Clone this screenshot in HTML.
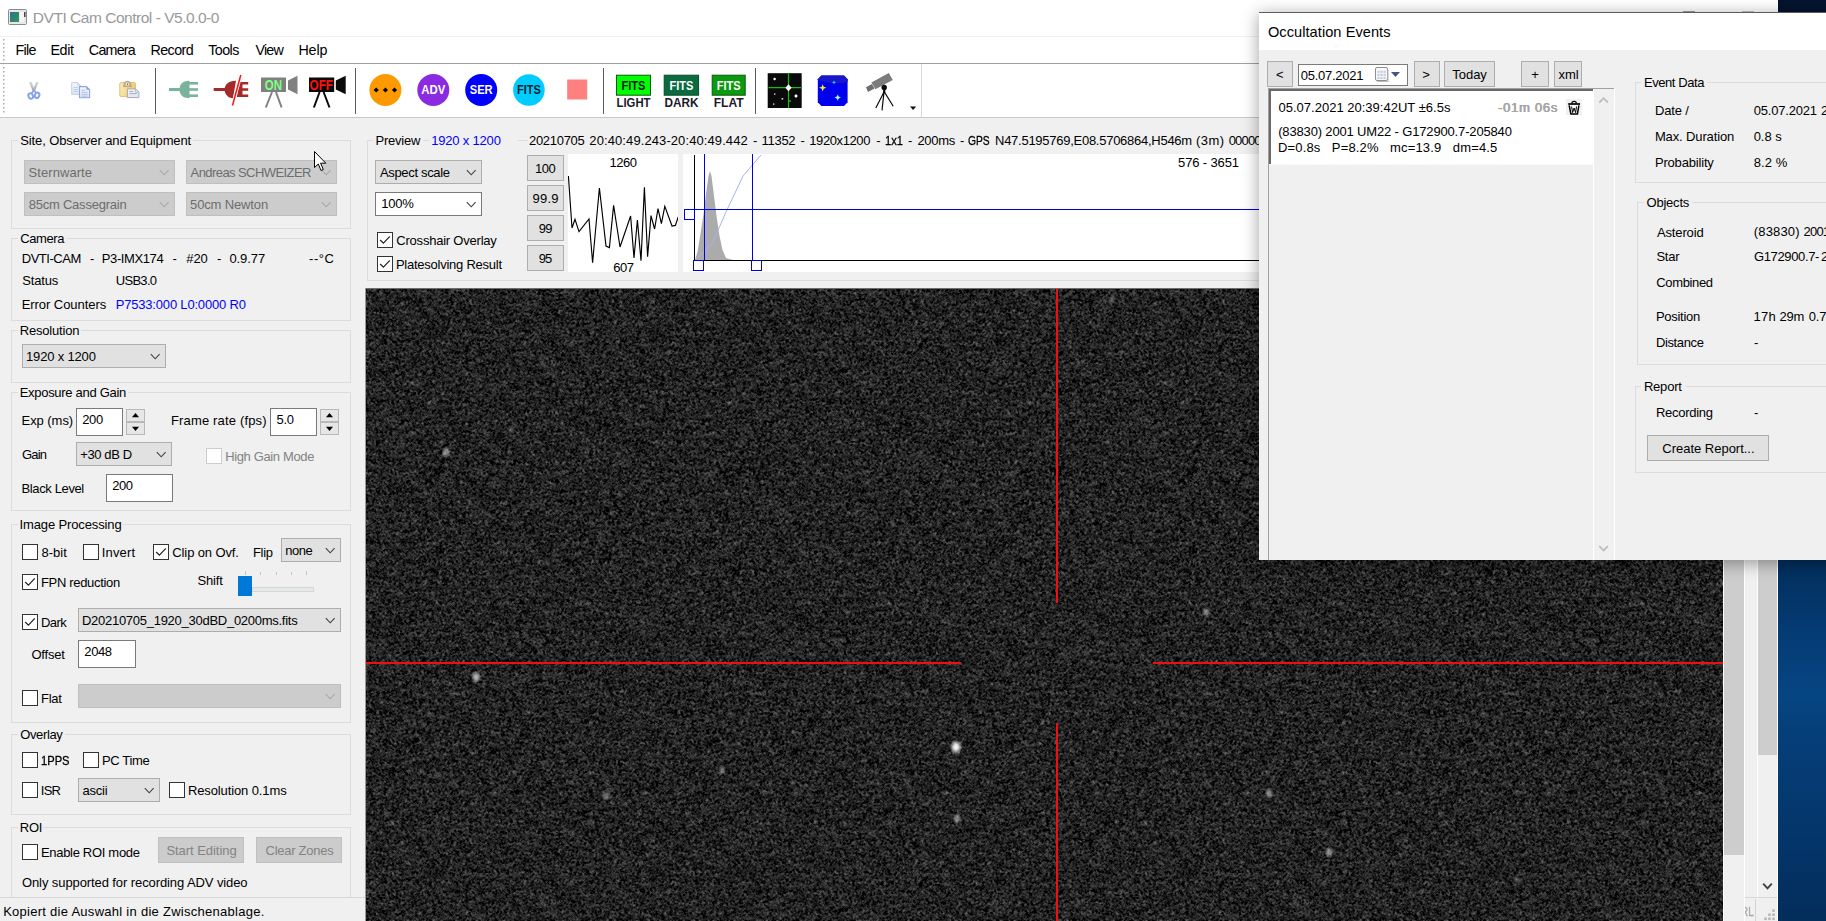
<!DOCTYPE html>
<html><head><meta charset="utf-8"><title>DVTI Cam Control</title><style>
html,body{margin:0;padding:0;}
body{width:1826px;height:921px;overflow:hidden;position:relative;background:#f0f0f0;font-family:"Liberation Sans",sans-serif;}
div,span,svg{position:absolute;}
.t{white-space:pre;line-height:16px;height:16px;}
</style></head><body>
<div style="left:0px;top:0px;width:1778px;height:35px;background:#ffffff;"></div>
<div style="left:0px;top:35px;width:1778px;height:28px;background:#ffffff;"></div>
<div style="left:0px;top:36px;width:1778px;height:1px;background:#f0f1f8;"></div>
<div style="left:0px;top:63px;width:1778px;height:1px;background:#a0a0a0;"></div>
<div style="left:0px;top:64px;width:1778px;height:53px;background:#ffffff;"></div>
<div style="left:0px;top:117px;width:1778px;height:1px;background:#c8c8c8;"></div>
<div style="left:921px;top:64px;width:1px;height:53px;background:#d8d8d8;"></div>
<svg style="left:8px;top:9px" width="20" height="17" viewBox="0 0 20 17">
<rect x="0.5" y="0.5" width="18" height="15" rx="1" fill="#e8e8e8" stroke="#8a8a8a"/>
<defs><linearGradient id="ig" x1="0" y1="0" x2="1" y2="1"><stop offset="0" stop-color="#2e6e8e"/><stop offset="1" stop-color="#2f9a5a"/></linearGradient></defs>
<rect x="2" y="3" width="9" height="10" fill="url(#ig)"/>
<rect x="12" y="3" width="4" height="10" fill="#f4f4f4"/>
<rect x="16" y="3" width="1.5" height="5" fill="#444"/>
</svg>
<span class="t" style="left:32.83px;top:10px;font-size:15.5px;color:#999999;letter-spacing:-0.477px;">DVTI Cam Control - V5.0.0-0</span>
<span class="t" style="left:15.43px;top:42px;font-size:14.3px;letter-spacing:-0.676px;">File</span>
<span class="t" style="left:50.43px;top:42px;font-size:14.3px;letter-spacing:-0.386px;">Edit</span>
<span class="t" style="left:88.87px;top:42px;font-size:14.3px;letter-spacing:-0.785px;">Camera</span>
<span class="t" style="left:150.43px;top:42px;font-size:14.3px;letter-spacing:-0.559px;">Record</span>
<span class="t" style="left:208.28px;top:42px;font-size:14.3px;letter-spacing:-0.584px;">Tools</span>
<span class="t" style="left:255.54px;top:42px;font-size:14.3px;letter-spacing:-0.834px;">View</span>
<span class="t" style="left:298.43px;top:42px;font-size:14.3px;letter-spacing:-0.143px;">Help</span>
<svg style="left:3px;top:39px" width="3" height="24"><rect x="0" y="0" width="1.5" height="1.5" fill="#a8a8a8"/><rect x="0" y="4" width="1.5" height="1.5" fill="#a8a8a8"/><rect x="0" y="8" width="1.5" height="1.5" fill="#a8a8a8"/><rect x="0" y="12" width="1.5" height="1.5" fill="#a8a8a8"/><rect x="0" y="16" width="1.5" height="1.5" fill="#a8a8a8"/><rect x="0" y="20" width="1.5" height="1.5" fill="#a8a8a8"/></svg>
<svg style="left:3px;top:67px" width="3" height="48"><rect x="0" y="0" width="1.5" height="1.5" fill="#a8a8a8"/><rect x="0" y="4" width="1.5" height="1.5" fill="#a8a8a8"/><rect x="0" y="8" width="1.5" height="1.5" fill="#a8a8a8"/><rect x="0" y="12" width="1.5" height="1.5" fill="#a8a8a8"/><rect x="0" y="16" width="1.5" height="1.5" fill="#a8a8a8"/><rect x="0" y="20" width="1.5" height="1.5" fill="#a8a8a8"/><rect x="0" y="24" width="1.5" height="1.5" fill="#a8a8a8"/><rect x="0" y="28" width="1.5" height="1.5" fill="#a8a8a8"/><rect x="0" y="32" width="1.5" height="1.5" fill="#a8a8a8"/><rect x="0" y="36" width="1.5" height="1.5" fill="#a8a8a8"/><rect x="0" y="40" width="1.5" height="1.5" fill="#a8a8a8"/><rect x="0" y="44" width="1.5" height="1.5" fill="#a8a8a8"/></svg>
<div style="left:155px;top:68px;width:1px;height:46px;background:#5a5a5a;"></div>
<div style="left:355px;top:68px;width:1px;height:46px;background:#5a5a5a;"></div>
<div style="left:603px;top:68px;width:1px;height:46px;background:#5a5a5a;"></div>
<div style="left:755px;top:68px;width:1px;height:46px;background:#5a5a5a;"></div>
<svg style="left:0px;top:64px" width="925" height="53" viewBox="0 64 925 53">
<!-- scissors -->
<defs>
<linearGradient id="bl" x1="0" y1="0" x2="0" y2="1"><stop offset="0" stop-color="#d9dce0"/><stop offset="1" stop-color="#9a9fa6"/></linearGradient>
<linearGradient id="cb" x1="0" y1="0" x2="1" y2="0.3"><stop offset="0" stop-color="#fbeebc"/><stop offset="1" stop-color="#f0cc6c"/></linearGradient>
<linearGradient id="pg" x1="0" y1="0" x2="0" y2="1"><stop offset="0" stop-color="#f4f7fc"/><stop offset="1" stop-color="#dde5f4"/></linearGradient>
</defs>
<g>
<path d="M28.9 82 L31.6 82 L35 91 L33 91.9 Z" fill="url(#bl)"/>
<path d="M38.7 82 L36 82 L32.6 91 L34.6 91.9 Z" fill="url(#bl)"/>
<path d="M34 90.4 L31.6 93.4 M34 90.4 L36.4 93" stroke="#8ba6ea" stroke-width="1.8" fill="none"/>
<ellipse cx="30.7" cy="96" rx="2.2" ry="2.8" transform="rotate(-22 30.7 96)" fill="#fff" stroke="#86a2e8" stroke-width="2"/>
<ellipse cx="37.1" cy="95.3" rx="2.2" ry="2.8" transform="rotate(22 37.1 95.3)" fill="#fff" stroke="#86a2e8" stroke-width="2"/>
</g>
<!-- copy -->
<g>
<path d="M71.7 82.6 H77.6 L80.4 85.4 V94.4 H71.7 Z" fill="url(#pg)" stroke="#c6cfe2" stroke-width="1"/>
<path d="M77.6 82.6 V85.4 H80.4" fill="none" stroke="#c6cfe2" stroke-width="0.8"/>
<path d="M73.6 87.5 H78 M73.6 89.5 H78 M73.6 91.5 H78" stroke="#b9c8ea" stroke-width="0.9"/>
<path d="M79.5 86.6 H86.4 L89.6 89.8 V97.7 H79.5 Z" fill="url(#pg)" stroke="#90a6e0" stroke-width="1.1"/>
<path d="M86.4 86.6 V89.8 H89.6 Z" fill="#8aa0dc"/>
<path d="M81.6 90.2 H85 M81.6 92.4 H87.6 M81.6 94.4 H87.6 M81.6 96.2 H87.6" stroke="#a9bbe8" stroke-width="0.9"/>
</g>
<!-- paste -->
<g>
<rect x="119.8" y="82.6" width="15.6" height="14" rx="1.4" fill="url(#cb)" stroke="#dcbc66" stroke-width="0.9"/>
<path d="M123.4 86.6 L124.6 82.4 Q127.4 79.8 130.2 82.4 L131.4 86.6 Z" fill="#bdb49a" stroke="#a39a80" stroke-width="0.7"/>
<path d="M125.6 85.4 L126.2 82.8 Q127.4 81.8 128.6 82.8 L129.2 85.4 Z" fill="#f8f0b8"/>
<rect x="127" y="83.4" width="0.9" height="1.5" fill="#5a5440"/>
<path d="M127.4 88.9 H135.6 L138.9 92.2 V97.6 H127.4 Z" fill="url(#pg)" stroke="#a8aab4" stroke-width="1"/>
<path d="M135.6 88.9 V92.2 H138.9" fill="none" stroke="#a8aab4" stroke-width="0.8"/>
<path d="M129.4 91.4 H133.4 M129.4 93.6 H136.8" stroke="#9aa4c0" stroke-width="0.9"/>
</g>
<!-- green plug -->
<g fill="#7ab39b">
<rect x="169" y="88" width="12" height="3"/>
<path d="M189.5 80.8 C182 80.8 179.5 85 179.5 89.5 C179.5 94 182 98.2 189.5 98.2 Z"/>
<rect x="189" y="82" width="9" height="2.6"/>
<rect x="189" y="88.2" width="9" height="2.6"/>
<rect x="189" y="94.4" width="9" height="2.6"/>
</g>
<!-- red plug -->
<g fill="#a52a2a">
<rect x="213.7" y="88" width="12" height="3"/>
<path d="M236 80.8 C228 80.8 224.6 85 224.6 89.5 C224.6 94 228 98.2 233 98.2 Z"/>
<path d="M241.5 82 H248.2 V84.6 H240.8 Z M240 88.2 H248.2 V90.8 H239.3 Z M238.5 94.4 H248.2 V97 H237.8 Z"/>
<path d="M239.2 82 H242.5 V97 H236.8 Z"/>
</g>
<path d="M240.8 75 L232.5 105.5" stroke="#fff" stroke-width="3.2"/>
<path d="M240.8 75 L232.5 105.5" stroke="#ff1010" stroke-width="1.5"/>
<!-- ON cam -->
<g>
<rect x="261" y="77.5" width="25" height="14.5" fill="#808080"/>
<path d="M288 80.6 L297.5 75.7 V94.3 L288 89.4 Z" fill="#808080"/>
<path d="M272 92 L265.8 107.5 M276 92 L281.6 107.5" stroke="#808080" stroke-width="2" fill="none"/>
<text x="273.5" y="89.6" font-family="Liberation Sans, sans-serif" font-weight="bold" font-size="14" fill="#80ff80" text-anchor="middle" textLength="17.3" lengthAdjust="spacingAndGlyphs">ON</text>
</g>
<!-- OFF cam -->
<g>
<rect x="309" y="77.5" width="25.2" height="14.5" fill="#0a0a0a"/>
<path d="M335.8 80.6 L345.7 75.7 V94.3 L335.8 89.4 Z" fill="#0a0a0a"/>
<path d="M319.6 92 L313.9 107.5 M323.6 92 L329.5 107.5" stroke="#0a0a0a" stroke-width="2" fill="none"/>
<text x="321.3" y="89.6" font-family="Liberation Sans, sans-serif" font-weight="bold" font-size="14" fill="#ff1010" text-anchor="middle" textLength="23.5" lengthAdjust="spacingAndGlyphs">OFF</text>
</g>
<!-- circles -->
<circle cx="385.4" cy="90" r="16" fill="#ff9900"/>
<g fill="#000"><path d="M376.2 87.4 L378.8 90 L376.2 92.6 L373.6 90 Z"/><path d="M385.4 87.4 L388 90 L385.4 92.6 L382.8 90 Z"/><path d="M394.5 87.4 L397.1 90 L394.5 92.6 L391.9 90 Z"/></g>
<circle cx="433.3" cy="90" r="16" fill="#8a2be2"/>
<text x="433.3" y="94" font-family="Liberation Sans, sans-serif" font-weight="bold" font-size="12.5" fill="#fff" text-anchor="middle" textLength="24" lengthAdjust="spacingAndGlyphs">ADV</text>
<circle cx="481.2" cy="90" r="16" fill="#0000ff"/>
<text x="481.2" y="94" font-family="Liberation Sans, sans-serif" font-weight="bold" font-size="12.5" fill="#fff" text-anchor="middle" textLength="23" lengthAdjust="spacingAndGlyphs">SER</text>
<circle cx="528.9" cy="90" r="15.8" fill="#00ccff"/>
<text x="528.9" y="94" font-family="Liberation Sans, sans-serif" font-weight="bold" font-size="12.5" fill="#06222a" text-anchor="middle" textLength="24" lengthAdjust="spacingAndGlyphs">FITS</text>
<rect x="567.2" y="79.5" width="20" height="20" fill="#ff8080"/>
<!-- FITS LIGHT / DARK / FLAT -->
<rect x="616.5" y="75.2" width="34" height="20" fill="#00ff00" stroke="#0a5a0a" stroke-width="1"/>
<text x="633.5" y="90" font-family="Liberation Sans, sans-serif" font-weight="bold" font-size="12.5" fill="#06200a" text-anchor="middle" textLength="24" lengthAdjust="spacingAndGlyphs">FITS</text>
<text x="633.5" y="106.6" font-family="Liberation Sans, sans-serif" font-weight="bold" font-size="12.5" fill="#1a1a2a" text-anchor="middle" textLength="34" lengthAdjust="spacingAndGlyphs">LIGHT</text>
<rect x="664.2" y="75.2" width="34.4" height="20" fill="#0a6a40" stroke="#0a4a2a" stroke-width="1"/>
<text x="681.4" y="90" font-family="Liberation Sans, sans-serif" font-weight="bold" font-size="12.5" fill="#fff" text-anchor="middle" textLength="24" lengthAdjust="spacingAndGlyphs">FITS</text>
<text x="681.4" y="106.6" font-family="Liberation Sans, sans-serif" font-weight="bold" font-size="12.5" fill="#1a1a2a" text-anchor="middle" textLength="34" lengthAdjust="spacingAndGlyphs">DARK</text>
<rect x="712.2" y="75.2" width="33" height="20" fill="#0a9a10" stroke="#0a5a0a" stroke-width="1"/>
<text x="728.7" y="90" font-family="Liberation Sans, sans-serif" font-weight="bold" font-size="12.5" fill="#fff" text-anchor="middle" textLength="24" lengthAdjust="spacingAndGlyphs">FITS</text>
<text x="728.7" y="106.6" font-family="Liberation Sans, sans-serif" font-weight="bold" font-size="12.5" fill="#1a1a2a" text-anchor="middle" textLength="30" lengthAdjust="spacingAndGlyphs">FLAT</text>
<!-- star field icon -->
<rect x="767.7" y="73.2" width="34" height="34.8" fill="#0a0a0a"/>
<path d="M788.5 73.2 V108 M768.5 87.7 H801" stroke="#10c010" stroke-width="1.2"/>
<path d="M788.5 84.2 L791.6 87.7 L788.5 91.2 L785.4 87.7 Z" fill="#fff"/>
<path d="M774.6 77.4 L776.2 79 L774.6 80.6 L773 79 Z M796 94 L797.8 96 L796 98 L794.2 96 Z" fill="#fff"/>
<rect x="774" y="93.4" width="1.4" height="1.4" fill="#ddd"/><rect x="781.6" y="98" width="1.6" height="1.6" fill="#ddd"/><rect x="773" y="103.4" width="1.4" height="1.4" fill="#ddd"/><rect x="789.4" y="100.4" width="1.2" height="1.2" fill="#ddd"/>
<!-- blue sky icon -->
<path d="M821.4 75.6 H844 L847.6 79.2 V102.3 L844 105.9 H821.4 L817.8 102.3 V79.2 Z" fill="#0000ee"/>
<path d="M817.8 80 C828 84 838 84 847.6 82 V79.2 L844 75.6 H821.4 L817.8 79.2 Z" fill="#1818c8"/>
<path d="M822.7 84.2 L823.7 86.8 L826.3 87.8 L823.7 88.8 L822.7 91.4 L821.7 88.8 L819.1 87.8 L821.7 86.8 Z" fill="#ffee10"/>
<path d="M834 80.4 L834.7 81.7 L836 82.4 L834.7 83.1 L834 84.4 L833.3 83.1 L832 82.4 L833.3 81.7 Z" fill="#20d0e8"/>
<path d="M837.7 94.4 L838.7 96.6 L840.9 97.6 L838.7 98.6 L837.7 100.8 L836.7 98.6 L834.5 97.6 L836.7 96.6 Z" fill="#a0ffe0"/>
<!-- telescope -->
<path d="M871.4 82.4 L888.8 73 L892.8 79.9 L875.4 89.2 Z" fill="#7c7c7c"/>
<path d="M866 87.2 L872 84 L874.4 88.6 L868 92 Z" fill="#6e6e6e"/>
<circle cx="884.2" cy="87.4" r="2.7" fill="#0a0a0a"/>
<path d="M884 92 L875.8 108 M884 92 L882 110.4 M884.4 92 L893.2 106.3" stroke="#0a0a0a" stroke-width="1.2" fill="none"/>
<path d="M884.2 87 V93" stroke="#0a0a0a" stroke-width="2.2"/>
<path d="M910 106.6 H916.2 L913.1 110 Z" fill="#111"/>
</svg>

<div style="left:11px;top:140px;width:340px;height:89px;border:1px solid #dcdcdc;box-sizing:border-box;"></div>
<div style="left:18.3px;top:140px;width:175px;height:1px;background:#f0f0f0;"></div>
<span class="t" style="left:20.31px;top:133px;font-size:13px;letter-spacing:-0.121px;">Site, Observer and Equipment</span>
<div style="left:24px;top:160px;width:151px;height:24px;background:#cccccc;border:1px solid #bfbfbf;box-sizing:border-box;"></div>
<span class="t" style="left:28.61px;top:165px;font-size:13px;color:#6d6d6d;letter-spacing:0.056px;">Sternwarte</span>
<svg style="left:159px;top:169.0px" width="11" height="8" viewBox="0 0 11 8"><path d="M0.8 1.2 L5.2 5.8 L9.6 1.2" fill="none" stroke="#a8a8a8" stroke-width="1.1"/></svg>
<div style="left:186px;top:160px;width:151px;height:24px;background:#cccccc;border:1px solid #bfbfbf;box-sizing:border-box;"></div>
<span class="t" style="left:190.57px;top:165px;font-size:13px;color:#6d6d6d;letter-spacing:-0.575px;">Andreas SCHWEIZER</span>
<svg style="left:321px;top:169.0px" width="11" height="8" viewBox="0 0 11 8"><path d="M0.8 1.2 L5.2 5.8 L9.6 1.2" fill="none" stroke="#a8a8a8" stroke-width="1.1"/></svg>
<div style="left:24px;top:192px;width:151px;height:24px;background:#cccccc;border:1px solid #bfbfbf;box-sizing:border-box;"></div>
<span class="t" style="left:28.64px;top:197px;font-size:13px;color:#6d6d6d;letter-spacing:-0.218px;">85cm Cassegrain</span>
<svg style="left:159px;top:201.0px" width="11" height="8" viewBox="0 0 11 8"><path d="M0.8 1.2 L5.2 5.8 L9.6 1.2" fill="none" stroke="#a8a8a8" stroke-width="1.1"/></svg>
<div style="left:186px;top:192px;width:151px;height:24px;background:#cccccc;border:1px solid #bfbfbf;box-sizing:border-box;"></div>
<span class="t" style="left:190.08px;top:197px;font-size:13px;color:#6d6d6d;letter-spacing:-0.141px;">50cm Newton</span>
<svg style="left:321px;top:201.0px" width="11" height="8" viewBox="0 0 11 8"><path d="M0.8 1.2 L5.2 5.8 L9.6 1.2" fill="none" stroke="#a8a8a8" stroke-width="1.1"/></svg>
<div style="left:11px;top:238px;width:340px;height:83px;border:1px solid #dcdcdc;box-sizing:border-box;"></div>
<div style="left:18.3px;top:238px;width:48.3px;height:1px;background:#f0f0f0;"></div>
<span class="t" style="left:20.24px;top:231px;font-size:13px;letter-spacing:-0.415px;">Camera</span>
<span class="t" style="left:21.73px;top:251px;font-size:13px;letter-spacing:-0.471px;">DVTI-CAM</span>
<span class="t" style="left:90.02px;top:251px;font-size:13px;">-</span>
<span class="t" style="left:101.83px;top:251px;font-size:13px;letter-spacing:-0.398px;">P3-IMX174</span>
<span class="t" style="left:172.62px;top:251px;font-size:13px;">-</span>
<span class="t" style="left:186.24px;top:251px;font-size:13px;letter-spacing:-0.062px;">#20</span>
<span class="t" style="left:217.02px;top:251px;font-size:13px;">-</span>
<span class="t" style="left:229.39px;top:251px;font-size:13px;letter-spacing:-0.076px;">0.9.77</span>
<span class="t" style="left:309.12px;top:251px;font-size:13px;letter-spacing:0.476px;">--°C</span>
<span class="t" style="left:22.21px;top:273px;font-size:13px;letter-spacing:-0.159px;">Status</span>
<span class="t" style="left:115.8px;top:273px;font-size:13px;letter-spacing:-0.718px;">USB3.0</span>
<span class="t" style="left:21.73px;top:297px;font-size:13px;letter-spacing:-0.063px;">Error Counters</span>
<span class="t" style="left:115.73px;top:297px;font-size:13px;color:#0000ff;letter-spacing:-0.187px;">P7533:000 L0:0000 R0</span>
<div style="left:11px;top:330px;width:340px;height:53px;border:1px solid #dcdcdc;box-sizing:border-box;"></div>
<div style="left:18.2px;top:330px;width:62.6px;height:1px;background:#f0f0f0;"></div>
<span class="t" style="left:19.73px;top:323px;font-size:13px;letter-spacing:-0.191px;">Resolution</span>
<div style="left:22px;top:344px;width:144px;height:24px;background:#e1e1e1;border:1px solid #adadad;box-sizing:border-box;"></div>
<span class="t" style="left:26.01px;top:349px;font-size:13px;letter-spacing:-0.167px;">1920 x 1200</span>
<svg style="left:150px;top:353.0px" width="11" height="8" viewBox="0 0 11 8"><path d="M0.8 1.2 L5.2 5.8 L9.6 1.2" fill="none" stroke="#404040" stroke-width="1.1"/></svg>
<div style="left:11px;top:392px;width:340px;height:119px;border:1px solid #dcdcdc;box-sizing:border-box;"></div>
<div style="left:18.2px;top:392px;width:109.4px;height:1px;background:#f0f0f0;"></div>
<span class="t" style="left:19.73px;top:385px;font-size:13px;letter-spacing:-0.299px;">Exposure and Gain</span>
<span class="t" style="left:21.53px;top:413px;font-size:13px;letter-spacing:-0.047px;">Exp (ms)</span>
<div style="left:76px;top:408px;width:47px;height:28px;background:#ffffff;border:1px solid #7a7a7a;box-sizing:border-box;"></div>
<span class="t" style="left:82.35px;top:412px;font-size:13px;letter-spacing:-0.464px;">200</span>
<div style="left:126px;top:409px;width:19px;height:13px;background:#e6e6e6;border:1px solid #b8b8b8;box-sizing:border-box;"></div>
<div style="left:126px;top:422px;width:19px;height:13px;background:#e6e6e6;border:1px solid #b8b8b8;box-sizing:border-box;"></div>
<svg style="left:126px;top:409px" width="19" height="26"><path d="M6 8.2 L9.5 4 L13 8.2 Z" fill="#000"/><path d="M6 17.8 L9.5 22 L13 17.8 Z" fill="#000"/></svg>
<span class="t" style="left:170.93px;top:413px;font-size:13px;letter-spacing:0.166px;">Frame rate (fps)</span>
<div style="left:270px;top:408px;width:47px;height:28px;background:#ffffff;border:1px solid #7a7a7a;box-sizing:border-box;"></div>
<span class="t" style="left:276.48px;top:412px;font-size:13px;letter-spacing:-0.322px;">5.0</span>
<div style="left:320px;top:409px;width:19px;height:13px;background:#e6e6e6;border:1px solid #b8b8b8;box-sizing:border-box;"></div>
<div style="left:320px;top:422px;width:19px;height:13px;background:#e6e6e6;border:1px solid #b8b8b8;box-sizing:border-box;"></div>
<svg style="left:320px;top:409px" width="19" height="26"><path d="M6 8.2 L9.5 4 L13 8.2 Z" fill="#000"/><path d="M6 17.8 L9.5 22 L13 17.8 Z" fill="#000"/></svg>
<span class="t" style="left:21.95px;top:447px;font-size:13px;letter-spacing:-0.787px;">Gain</span>
<div style="left:76px;top:442px;width:96px;height:24px;background:#e1e1e1;border:1px solid #adadad;box-sizing:border-box;"></div>
<span class="t" style="left:80.37px;top:447px;font-size:13px;letter-spacing:-0.415px;">+30 dB D</span>
<svg style="left:156px;top:451.0px" width="11" height="8" viewBox="0 0 11 8"><path d="M0.8 1.2 L5.2 5.8 L9.6 1.2" fill="none" stroke="#404040" stroke-width="1.1"/></svg>
<div style="left:206px;top:448px;width:16px;height:16px;background:#ffffff;border:1px solid #cccccc;box-sizing:border-box;"></div>
<span class="t" style="left:225.13px;top:449px;font-size:13px;color:#838383;letter-spacing:-0.361px;">High Gain Mode</span>
<span class="t" style="left:21.53px;top:481px;font-size:13px;letter-spacing:-0.374px;">Black Level</span>
<div style="left:106px;top:474px;width:67px;height:28px;background:#ffffff;border:1px solid #7a7a7a;box-sizing:border-box;"></div>
<span class="t" style="left:112.35px;top:478px;font-size:13px;letter-spacing:-0.564px;">200</span>
<div style="left:11px;top:524px;width:340px;height:199px;border:1px solid #dcdcdc;box-sizing:border-box;"></div>
<div style="left:18.2px;top:524px;width:104.8px;height:1px;background:#f0f0f0;"></div>
<span class="t" style="left:19.6px;top:517px;font-size:13px;letter-spacing:-0.134px;">Image Processing</span>
<div style="left:22px;top:544px;width:16px;height:16px;background:#ffffff;border:1px solid #333333;box-sizing:border-box;"></div>
<span class="t" style="left:41.44px;top:545px;font-size:13px;letter-spacing:0.043px;">8-bit</span>
<div style="left:83px;top:544px;width:16px;height:16px;background:#ffffff;border:1px solid #333333;box-sizing:border-box;"></div>
<span class="t" style="left:101.8px;top:545px;font-size:13px;letter-spacing:0.156px;">Invert</span>
<div style="left:153px;top:544px;width:16px;height:16px;background:#ffffff;border:1px solid #333333;box-sizing:border-box;"></div>
<svg style="left:153px;top:544px" width="16" height="16" viewBox="0 0 16 16"><path d="M3.2 8.0 L6.4 11.2 L12.8 4.4" fill="none" stroke="#222" stroke-width="1.2"/></svg>
<span class="t" style="left:172.34px;top:545px;font-size:13px;letter-spacing:-0.115px;">Clip on Ovf.</span>
<span class="t" style="left:252.93px;top:545px;font-size:13px;letter-spacing:-0.312px;">Flip</span>
<div style="left:281px;top:538px;width:60px;height:24px;background:#e1e1e1;border:1px solid #adadad;box-sizing:border-box;"></div>
<span class="t" style="left:285.34px;top:543px;font-size:13px;letter-spacing:-0.493px;">none</span>
<svg style="left:325px;top:547.0px" width="11" height="8" viewBox="0 0 11 8"><path d="M0.8 1.2 L5.2 5.8 L9.6 1.2" fill="none" stroke="#404040" stroke-width="1.1"/></svg>
<div style="left:22px;top:574px;width:16px;height:16px;background:#ffffff;border:1px solid #333333;box-sizing:border-box;"></div>
<svg style="left:22px;top:574px" width="16" height="16" viewBox="0 0 16 16"><path d="M3.2 8.0 L6.4 11.2 L12.8 4.4" fill="none" stroke="#222" stroke-width="1.2"/></svg>
<span class="t" style="left:40.93px;top:575px;font-size:13px;letter-spacing:-0.315px;">FPN reduction</span>
<span class="t" style="left:197.41px;top:573px;font-size:13px;letter-spacing:-0.132px;">Shift</span>
<div style="left:245px;top:571px;width:1px;height:4px;background:#c4c4c4;"></div>
<div style="left:260px;top:572px;width:1px;height:3px;background:#c4c4c4;"></div>
<div style="left:276px;top:572px;width:1px;height:3px;background:#c4c4c4;"></div>
<div style="left:291px;top:572px;width:1px;height:3px;background:#c4c4c4;"></div>
<div style="left:306px;top:571px;width:1px;height:4px;background:#c4c4c4;"></div>
<div style="left:252px;top:587px;width:62px;height:5px;background:#e7eaea;border:1px solid #d6d6d6;box-sizing:border-box;"></div>
<div style="left:238px;top:576px;width:14px;height:20px;background:#0078d7;"></div>
<div style="left:22px;top:614px;width:16px;height:16px;background:#ffffff;border:1px solid #333333;box-sizing:border-box;"></div>
<svg style="left:22px;top:614px" width="16" height="16" viewBox="0 0 16 16"><path d="M3.2 8.0 L6.4 11.2 L12.8 4.4" fill="none" stroke="#222" stroke-width="1.2"/></svg>
<span class="t" style="left:40.93px;top:615px;font-size:13px;letter-spacing:-0.533px;">Dark</span>
<div style="left:78px;top:608px;width:263px;height:24px;background:#e1e1e1;border:1px solid #adadad;box-sizing:border-box;"></div>
<span class="t" style="left:81.93px;top:613px;font-size:13px;letter-spacing:-0.268px;">D20210705_1920_30dBD_0200ms.fits</span>
<svg style="left:325px;top:617.0px" width="11" height="8" viewBox="0 0 11 8"><path d="M0.8 1.2 L5.2 5.8 L9.6 1.2" fill="none" stroke="#404040" stroke-width="1.1"/></svg>
<span class="t" style="left:31.38px;top:647px;font-size:13px;letter-spacing:-0.186px;">Offset</span>
<div style="left:78px;top:640px;width:58px;height:28px;background:#ffffff;border:1px solid #7a7a7a;box-sizing:border-box;"></div>
<span class="t" style="left:84.35px;top:644px;font-size:13px;letter-spacing:-0.434px;">2048</span>
<div style="left:22px;top:690px;width:16px;height:16px;background:#ffffff;border:1px solid #333333;box-sizing:border-box;"></div>
<span class="t" style="left:40.93px;top:691px;font-size:13px;letter-spacing:-0.236px;">Flat</span>
<div style="left:78px;top:684px;width:263px;height:24px;background:#cccccc;border:1px solid #bfbfbf;box-sizing:border-box;"></div>
<svg style="left:325px;top:693.0px" width="11" height="8" viewBox="0 0 11 8"><path d="M0.8 1.2 L5.2 5.8 L9.6 1.2" fill="none" stroke="#a8a8a8" stroke-width="1.1"/></svg>
<div style="left:11px;top:734px;width:340px;height:81px;border:1px solid #dcdcdc;box-sizing:border-box;"></div>
<div style="left:18.2px;top:734px;width:46.8px;height:1px;background:#f0f0f0;"></div>
<span class="t" style="left:20.18px;top:727px;font-size:13px;letter-spacing:-0.358px;">Overlay</span>
<div style="left:22px;top:752px;width:16px;height:16px;background:#ffffff;border:1px solid #333333;box-sizing:border-box;"></div>
<span class="t" style="left:41.01px;top:753px;font-size:13px;transform:scaleX(0.8592);transform-origin:0 0;-webkit-text-stroke:0.3px;">1PPS</span>
<div style="left:83px;top:752px;width:16px;height:16px;background:#ffffff;border:1px solid #333333;box-sizing:border-box;"></div>
<span class="t" style="left:101.93px;top:753px;font-size:13px;letter-spacing:-0.339px;">PC Time</span>
<div style="left:22px;top:782px;width:16px;height:16px;background:#ffffff;border:1px solid #333333;box-sizing:border-box;"></div>
<span class="t" style="left:40.8px;top:783px;font-size:13px;letter-spacing:-0.734px;">ISR</span>
<div style="left:78px;top:778px;width:82px;height:24px;background:#e1e1e1;border:1px solid #adadad;box-sizing:border-box;"></div>
<span class="t" style="left:82.45px;top:783px;font-size:13px;letter-spacing:-0.195px;">ascii</span>
<svg style="left:144px;top:787.0px" width="11" height="8" viewBox="0 0 11 8"><path d="M0.8 1.2 L5.2 5.8 L9.6 1.2" fill="none" stroke="#404040" stroke-width="1.1"/></svg>
<div style="left:169px;top:782px;width:16px;height:16px;background:#ffffff;border:1px solid #333333;box-sizing:border-box;"></div>
<span class="t" style="left:187.93px;top:783px;font-size:13px;letter-spacing:-0.114px;">Resolution 0.1ms</span>
<div style="left:11px;top:827px;width:340px;height:80px;border:1px solid #dcdcdc;box-sizing:border-box;"></div>
<div style="left:18.2px;top:827px;width:25.2px;height:1px;background:#f0f0f0;"></div>
<span class="t" style="left:19.73px;top:820px;font-size:13px;letter-spacing:-0.223px;">ROI</span>
<div style="left:22px;top:844px;width:16px;height:16px;background:#ffffff;border:1px solid #333333;box-sizing:border-box;"></div>
<span class="t" style="left:40.93px;top:845px;font-size:13px;letter-spacing:-0.306px;">Enable ROI mode</span>
<div style="left:158px;top:837px;width:86px;height:26px;background:#cccccc;border:1px solid #bfbfbf;box-sizing:border-box;"></div>
<span class="t" style="left:166.41px;top:843px;font-size:13px;color:#838383;letter-spacing:-0.049px;">Start Editing</span>
<div style="left:256px;top:837px;width:86px;height:26px;background:#cccccc;border:1px solid #bfbfbf;box-sizing:border-box;"></div>
<span class="t" style="left:265.54px;top:843px;font-size:13px;color:#838383;letter-spacing:-0.268px;">Clear Zones</span>
<span class="t" style="left:21.98px;top:875px;font-size:13px;letter-spacing:-0.093px;">Only supported for recording ADV video</span>
<div style="left:0px;top:897px;width:1778px;height:24px;background:#f0f0f0;"></div>
<div style="left:0px;top:897px;width:1778px;height:1px;background:#d7d7d7;"></div>
<span class="t" style="left:3.13px;top:904px;font-size:13px;letter-spacing:0.271px;">Kopiert die Auswahl in die Zwischenablage.</span>
<svg style="left:313px;top:150px" width="16" height="24" viewBox="0 0 16 24"><path d="M1.5 1.5 L1.5 17.5 L5.3 14 L8 20.5 L10.3 19.5 L7.6 13.2 L12.8 13.2 Z" fill="#fff" stroke="#000" stroke-width="1"/></svg>
<div style="left:367px;top:140px;width:1400px;height:141px;border:1px solid #dcdcdc;box-sizing:border-box;"></div>
<div style="left:373px;top:140px;width:50px;height:1px;background:#f0f0f0;"></div>
<span class="t" style="left:375.53px;top:133px;font-size:13px;letter-spacing:-0.234px;">Preview</span>
<div style="left:429px;top:140px;width:89px;height:1px;background:#f0f0f0;"></div>
<span class="t" style="left:431.21px;top:133px;font-size:13px;color:#0000ff;letter-spacing:-0.187px;">1920 x 1200</span>
<div style="left:528px;top:133px;width:740px;height:16px;background:#f0f0f0;"></div>
<span class="t" style="left:528.95px;top:133px;font-size:13px;letter-spacing:-0.291px;">20210705</span>
<span class="t" style="left:589.35px;top:133px;font-size:13px;letter-spacing:0.094px;">20:40:49.243-20:40:49.442</span>
<span class="t" style="left:753.02px;top:133px;font-size:13px;">-</span>
<span class="t" style="left:761.61px;top:133px;font-size:13px;letter-spacing:-0.310px;">11352</span>
<span class="t" style="left:800.62px;top:133px;font-size:13px;">-</span>
<span class="t" style="left:809.31px;top:133px;font-size:13px;letter-spacing:-0.405px;">1920x1200</span>
<span class="t" style="left:876.22px;top:133px;font-size:13px;">-</span>
<span class="t" style="left:884.81px;top:133px;font-size:13px;transform:scaleX(0.8534);transform-origin:0 0;-webkit-text-stroke:0.3px;">1x1</span>
<span class="t" style="left:908.12px;top:133px;font-size:13px;">-</span>
<span class="t" style="left:917.45px;top:133px;font-size:13px;letter-spacing:-0.324px;">200ms</span>
<span class="t" style="left:960.12px;top:133px;font-size:13px;">-</span>
<span class="t" style="left:968.35px;top:133px;font-size:13px;transform:scaleX(0.7900);transform-origin:0 0;-webkit-text-stroke:0.3px;">GPS</span>
<span class="t" style="left:995.03px;top:133px;font-size:13px;letter-spacing:-0.265px;">N47.5195769,E08.5706864,H546m</span>
<span class="t" style="left:1196.09px;top:133px;font-size:13px;letter-spacing:0.398px;">(3m)</span>
<span class="t" style="left:1228.69px;top:133px;font-size:13px;letter-spacing:-0.834px;">00000</span>
<div style="left:375px;top:160px;width:107px;height:24px;background:#e1e1e1;border:1px solid #adadad;box-sizing:border-box;"></div>
<span class="t" style="left:379.97px;top:165px;font-size:13px;letter-spacing:-0.336px;">Aspect scale</span>
<svg style="left:466px;top:169.0px" width="11" height="8" viewBox="0 0 11 8"><path d="M0.8 1.2 L5.2 5.8 L9.6 1.2" fill="none" stroke="#404040" stroke-width="1.1"/></svg>
<div style="left:375px;top:192px;width:107px;height:24px;background:#ffffff;border:1px solid #7a7a7a;box-sizing:border-box;"></div>
<span class="t" style="left:381.21px;top:196px;font-size:13px;letter-spacing:-0.198px;">100%</span>
<svg style="left:466px;top:201.0px" width="11" height="8" viewBox="0 0 11 8"><path d="M0.8 1.2 L5.2 5.8 L9.6 1.2" fill="none" stroke="#404040" stroke-width="1.1"/></svg>
<div style="left:377px;top:232px;width:16px;height:16px;background:#ffffff;border:1px solid #333333;box-sizing:border-box;"></div>
<svg style="left:377px;top:232px" width="16" height="16" viewBox="0 0 16 16"><path d="M3.2 8.0 L6.4 11.2 L12.8 4.4" fill="none" stroke="#222" stroke-width="1.2"/></svg>
<span class="t" style="left:396.34px;top:233px;font-size:13px;letter-spacing:-0.221px;">Crosshair Overlay</span>
<div style="left:377px;top:256px;width:16px;height:16px;background:#ffffff;border:1px solid #333333;box-sizing:border-box;"></div>
<svg style="left:377px;top:256px" width="16" height="16" viewBox="0 0 16 16"><path d="M3.2 8.0 L6.4 11.2 L12.8 4.4" fill="none" stroke="#222" stroke-width="1.2"/></svg>
<span class="t" style="left:395.93px;top:257px;font-size:13px;letter-spacing:-0.244px;">Platesolving Result</span>
<div style="left:527px;top:155px;width:37px;height:26px;background:#e1e1e1;border:1px solid #adadad;box-sizing:border-box;"></div>
<span class="t" style="left:535.01px;top:161px;font-size:13px;letter-spacing:-0.496px;">100</span>
<div style="left:527px;top:185px;width:37px;height:26px;background:#e1e1e1;border:1px solid #adadad;box-sizing:border-box;"></div>
<span class="t" style="left:532.59px;top:191px;font-size:13px;letter-spacing:0.241px;">99.9</span>
<div style="left:527px;top:215px;width:37px;height:26px;background:#e1e1e1;border:1px solid #adadad;box-sizing:border-box;"></div>
<span class="t" style="left:538.79px;top:221px;font-size:13px;letter-spacing:-0.835px;">99</span>
<div style="left:527px;top:245px;width:37px;height:26px;background:#e1e1e1;border:1px solid #adadad;box-sizing:border-box;"></div>
<span class="t" style="left:538.79px;top:251px;font-size:13px;letter-spacing:-0.905px;">95</span>
<div style="left:568px;top:154px;width:110px;height:118px;background:#ffffff;"></div>
<span class="t" style="left:609.61px;top:155px;font-size:13px;letter-spacing:-0.541px;">1260</span>
<span class="t" style="left:613.34px;top:260px;font-size:13px;letter-spacing:-0.488px;">607</span>
<svg style="left:568px;top:154px" width="110" height="118"><polyline points="0.4,22.0 4.0,74.0 7.0,65.4 11.0,77.6 21.0,65.0 24.6,108.6 31.4,34.0 38.0,92.0 41.4,93.6 45.6,51.4 52.0,93.0 62.6,62.0 66.0,104.0 69.4,66.0 73.0,106.6 76.4,33.4 79.6,102.6 83.0,61.6 86.6,75.0 90.0,54.6 93.4,69.6 96.8,52.4 104.0,72.0 107.4,71.4 110.2,63.0" fill="none" stroke="#000" stroke-width="1.15"/></svg>
<div style="left:683px;top:154px;width:1000px;height:118px;background:#ffffff;"></div>
<svg style="left:683px;top:154px" width="700" height="118" viewBox="0 0 700 118">
<path d="M12 106 L14.5 98 L17.5 80 L20.4 61 L23 40 L25.5 22 L27 17 L28.5 22 L31 42 L33.4 61 L36.5 82 L39.5 96 L43 104 L50 106 L100 106.5 Z" fill="#ababab"/>
<path d="M12 106 L29 90 L43 58 L60 22 L78 1" fill="none" stroke="#aab0f8" stroke-width="1"/>
<path d="M11.5 1 V106.5 H700" fill="none" stroke="#000" stroke-width="1"/>
<path d="M21.5 0 V106.5 M69.5 0 V106.5 M1.5 55.5 H700" fill="none" stroke="#0000e0" stroke-width="1"/>
<rect x="1.5" y="55.5" width="10" height="10" fill="#fff" stroke="#0000e0"/>
<rect x="10.5" y="106.5" width="10" height="10" fill="#fff" stroke="#0000e0"/>
<rect x="68.5" y="106.5" width="10" height="10" fill="#fff" stroke="#0000e0"/>
</svg>
<span class="t" style="left:1178.08px;top:155px;font-size:13px;letter-spacing:-0.134px;">576 - 3651</span>
<svg style="left:366px;top:288px" width="1357" height="633" viewBox="0 0 1357 633">
<defs>
<filter id="nz" x="0" y="0" width="100%" height="100%" color-interpolation-filters="sRGB">
<feTurbulence type="fractalNoise" baseFrequency="1.7 1.9" numOctaves="1" seed="7"/>
<feConvolveMatrix order="3" kernelMatrix="1 2 1 2 7 2 1 2 1" edgeMode="duplicate" preserveAlpha="true"/>
<feColorMatrix type="matrix" values="1.75 0 0 0 -0.742  1.75 0 0 0 -0.742  1.75 0 0 0 -0.742  0 0 0 0 1"/>
</filter>
<radialGradient id="st"><stop offset="0" stop-color="#fff" stop-opacity="1"/><stop offset="0.35" stop-color="#fff" stop-opacity="0.85"/><stop offset="1" stop-color="#fff" stop-opacity="0"/></radialGradient>
</defs>
<rect width="1357" height="633" fill="#2e2e2e"/>
<rect width="1357" height="633" filter="url(#nz)"/>
<ellipse cx="80" cy="164" rx="4.8" ry="6.0" fill="url(#st)" opacity="0.55"/>
<ellipse cx="110" cy="389" rx="5.3" ry="6.6" fill="url(#st)" opacity="0.7"/>
<ellipse cx="590" cy="459" rx="6.3" ry="7.8" fill="url(#st)" opacity="1.0"/>
<ellipse cx="591" cy="531" rx="4.8" ry="6.0" fill="url(#st)" opacity="0.5"/>
<ellipse cx="240" cy="508" rx="4.8" ry="6.0" fill="url(#st)" opacity="0.4"/>
<ellipse cx="356" cy="482" rx="4.3" ry="5.4" fill="url(#st)" opacity="0.3"/>
<ellipse cx="840" cy="324" rx="4.8" ry="6.0" fill="url(#st)" opacity="0.4"/>
<ellipse cx="903" cy="505" rx="4.8" ry="6.0" fill="url(#st)" opacity="0.55"/>
<ellipse cx="963" cy="564" rx="4.8" ry="6.0" fill="url(#st)" opacity="0.55"/>
<ellipse cx="746" cy="12" rx="4.3" ry="5.4" fill="url(#st)" opacity="0.3"/>
<ellipse cx="1151" cy="592" rx="4.3" ry="5.4" fill="url(#st)" opacity="0.25"/>
<ellipse cx="70" cy="487" rx="4.3" ry="5.4" fill="url(#st)" opacity="0.2"/>
<ellipse cx="145" cy="142" rx="4.3" ry="5.4" fill="url(#st)" opacity="0.2"/>
<rect x="690" y="0" width="2" height="315" fill="#ee1010"/>
<rect x="690" y="435" width="2" height="198" fill="#ee1010"/>
<rect x="0" y="374" width="595" height="2" fill="#ee1010"/>
<rect x="787" y="374" width="570" height="2" fill="#ee1010"/>
</svg>
<div style="left:365px;top:288px;width:1358px;height:1px;background:#6e6e6e;"></div>
<div style="left:365px;top:288px;width:1px;height:633px;background:#9a9a9a;"></div>
<div style="left:1723px;top:288px;width:55px;height:633px;background:#f0f0f0;"></div>
<div style="left:1723px;top:288px;width:1px;height:633px;background:#ffffff;"></div>
<div style="left:1744px;top:288px;width:1px;height:633px;background:#ffffff;"></div>
<div style="left:1757px;top:288px;width:1px;height:633px;background:#ffffff;"></div>
<div style="left:1777px;top:288px;width:1px;height:633px;background:#ffffff;"></div>
<div style="left:1724px;top:288px;width:20px;height:567px;background:#cdcdcd;"></div>
<div style="left:1758px;top:288px;width:19px;height:467px;background:#cdcdcd;"></div>
<svg style="left:1761px;top:881px" width="13" height="11" viewBox="0 0 13 11"><path d="M2.2 2.6 L6.5 7.4 L10.8 2.6" fill="none" stroke="#404040" stroke-width="1.9"/></svg>
<div style="left:1745px;top:897px;width:33px;height:24px;background:#f0f0f0;"></div>
<div style="left:1745px;top:897px;width:33px;height:1px;background:#d7d7d7;"></div>
<div style="left:1777px;top:897px;width:1px;height:24px;background:#ffffff;"></div>
<span class="t" style="left:1741.03px;top:904px;font-size:13px;color:#a8a8a8;transform:scaleX(0.7606);transform-origin:0 0;-webkit-text-stroke:0.3px;">RL</span>
<div style="left:1723px;top:897px;width:22px;height:24px;background:#f0f0f0;"></div>
<div style="left:1723px;top:897px;width:1px;height:24px;background:#ffffff;"></div>
<div style="left:1744px;top:897px;width:1px;height:24px;background:#ffffff;"></div>
<div style="left:1755px;top:899px;width:1px;height:22px;background:#d4d4d4;"></div>
<svg style="left:1764px;top:909px" width="12" height="12"><rect x="8.2" y="0.3" width="2.6" height="2.6" fill="#b8b8b8"/><rect x="4.2" y="4.4" width="2.6" height="2.6" fill="#b8b8b8"/><rect x="8.2" y="4.4" width="2.6" height="2.6" fill="#b8b8b8"/><rect x="0.2" y="8.5" width="2.6" height="2.6" fill="#b8b8b8"/><rect x="4.2" y="8.5" width="2.6" height="2.6" fill="#b8b8b8"/><rect x="8.2" y="8.5" width="2.6" height="2.6" fill="#b8b8b8"/></svg>
<div style="left:1778px;top:0px;width:48px;height:921px;background:#04386f;background:linear-gradient(180deg,#04142e 0px,#04142e 12px,#032e5c 560px,#043b73 630px,#064583 695px,#053e78 740px,#04356a 840px,#032d5a 921px);"></div>
<div style="left:1683px;top:11px;width:12px;height:1px;background:#9a9a9a;"></div>
<div style="left:1742px;top:11px;width:12px;height:1px;background:#c4c4c4;"></div>
<div style="left:1259px;top:12px;width:600px;height:548px;background:#f0f0f0;box-shadow:0 3px 15px 1px rgba(0,0,0,0.34);"></div>
<div style="left:1259px;top:12px;width:600px;height:1px;background:#5c5c5c;"></div>
<div style="left:1259px;top:13px;width:600px;height:37px;background:#ffffff;"></div>
<span class="t" style="left:1267.91px;top:24px;font-size:14.6px;letter-spacing:0.056px;">Occultation Events</span>
<div style="left:1267px;top:61px;width:26px;height:26px;background:#e1e1e1;border:1px solid #adadad;box-sizing:border-box;"></div>
<span class="t" style="left:1275.96px;top:67px;font-size:13px;">&lt;</span>
<div style="left:1298px;top:64px;width:110px;height:22px;background:#ffffff;border:1px solid #7a7a7a;box-sizing:border-box;"></div>
<span class="t" style="left:1300.69px;top:68px;font-size:13px;letter-spacing:-0.258px;">05.07.2021</span>
<svg style="left:1374px;top:66px" width="30" height="18" viewBox="0 0 30 18">
<rect x="1.5" y="1.5" width="12" height="13" rx="1.5" fill="#fafafa" stroke="#8e8e8e"/>
<path d="M14 4 V15.5 H3" fill="none" stroke="#bdbdbd" stroke-width="1.2"/>
<rect x="3.3" y="4.6" width="2.3" height="2.3" fill="#c9d0e4"/><rect x="3.3" y="7.7" width="2.3" height="2.3" fill="#c9d0e4"/><rect x="3.3" y="10.8" width="2.3" height="2.3" fill="#c9d0e4"/><rect x="6.4" y="4.6" width="2.3" height="2.3" fill="#c9d0e4"/><rect x="6.4" y="7.7" width="2.3" height="2.3" fill="#c9d0e4"/><rect x="6.4" y="10.8" width="2.3" height="2.3" fill="#c9d0e4"/><rect x="9.5" y="4.6" width="2.3" height="2.3" fill="#c9d0e4"/><rect x="9.5" y="7.7" width="2.3" height="2.3" fill="#c9d0e4"/><rect x="9.5" y="10.8" width="2.3" height="2.3" fill="#c9d0e4"/>
<path d="M17 6 L26 6 L21.5 11 Z" fill="#44557f"/>
</svg>
<div style="left:1414px;top:61px;width:26px;height:26px;background:#e1e1e1;border:1px solid #adadad;box-sizing:border-box;"></div>
<span class="t" style="left:1422.36px;top:67px;font-size:13px;">&gt;</span>
<div style="left:1444px;top:61px;width:51px;height:26px;background:#e1e1e1;border:1px solid #adadad;box-sizing:border-box;"></div>
<span class="t" style="left:1452.31px;top:67px;font-size:13px;letter-spacing:-0.043px;">Today</span>
<div style="left:1521px;top:61px;width:28px;height:26px;background:#e1e1e1;border:1px solid #adadad;box-sizing:border-box;"></div>
<span class="t" style="left:1531.37px;top:67px;font-size:13px;">+</span>
<div style="left:1554px;top:61px;width:28px;height:26px;background:#e1e1e1;border:1px solid #adadad;box-sizing:border-box;"></div>
<span class="t" style="left:1558.45px;top:67px;font-size:13px;letter-spacing:-0.001px;">xml</span>
<div style="left:1268px;top:88px;width:347px;height:472px;background:#f0f0f0;"></div>
<div style="left:1268px;top:88px;width:347px;height:1px;background:#a0a0a0;"></div>
<div style="left:1268px;top:88px;width:1px;height:472px;background:#a0a0a0;"></div>
<div style="left:1269px;top:89px;width:324px;height:2px;background:#696969;"></div>
<div style="left:1269px;top:89px;width:2px;height:75px;background:#696969;"></div>
<div style="left:1271px;top:91px;width:322px;height:73px;background:#ffffff;"></div>
<div style="left:1269px;top:164px;width:324px;height:1px;background:#fafafa;"></div>
<div style="left:1593px;top:89px;width:1px;height:471px;background:#ffffff;"></div>
<div style="left:1614px;top:88px;width:1px;height:472px;background:#ffffff;"></div>
<svg style="left:1598px;top:95.5px" width="12" height="9" viewBox="0 0 12 9"><path d="M1.3 6.5 L5.6 2.2 L9.9 6.5" fill="none" stroke="#bdbdbd" stroke-width="1.8"/></svg>
<svg style="left:1598px;top:544px" width="12" height="9" viewBox="0 0 12 9"><path d="M1.3 2.2 L5.6 6.5 L9.9 2.2" fill="none" stroke="#bdbdbd" stroke-width="1.8"/></svg>
<span class="t" style="left:1278.49px;top:100px;font-size:13px;letter-spacing:0.010px;">05.07.2021 20:39:42UT ±6.5s</span>
<span class="t" style="left:1498.02px;top:100px;font-size:13px;color:#a6a6a6;letter-spacing:0.722px;text-shadow:0.5px 0 0 #a6a6a6,-0.2px 0 0 #a6a6a6;">-01m 06s</span>
<div style="left:1566px;top:99px;width:16px;height:16px;background:#f0f0f0;"></div>
<svg style="left:1566px;top:99px" width="16" height="16" viewBox="0 0 16 16">
<path d="M5.8 4.4 C6 1.6 10.2 1.6 10.4 4.4" fill="none" stroke="#000" stroke-width="1.3"/>
<path d="M2.2 5 H14" stroke="#000" stroke-width="1.7"/>
<path d="M3.2 6.4 L4.9 15 H11.4 L12.9 6.4" fill="#fff" stroke="#000" stroke-width="1.5"/>
<path d="M5.6 7.5 L6.6 13.6 L8.1 9 L9.6 13.6 L10.5 7.5" stroke="#000" stroke-width="1" fill="none"/>
</svg>
<span class="t" style="left:1278.19px;top:124px;font-size:13px;letter-spacing:-0.157px;">(83830) 2001 UM22 - G172900.7-205840</span>
<span class="t" style="left:1277.93px;top:140px;font-size:13px;letter-spacing:0.167px;">D=0.8s   P=8.2%   mc=13.9   dm=4.5</span>
<div style="left:1635px;top:82px;width:300px;height:101px;border:1px solid #dcdcdc;box-sizing:border-box;"></div>
<div style="left:1641.4px;top:82px;width:66px;height:1px;background:#f0f0f0;"></div>
<span class="t" style="left:1643.93px;top:75px;font-size:13px;letter-spacing:-0.428px;">Event Data</span>
<span class="t" style="left:1654.93px;top:103px;font-size:13px;letter-spacing:-0.163px;">Date /</span>
<span class="t" style="left:1753.69px;top:103px;font-size:13px;letter-spacing:-0.191px;">05.07.2021</span>
<span class="t" style="left:1820.95px;top:103px;font-size:13px;letter-spacing:0.234px;">20:39</span>
<span class="t" style="left:1654.93px;top:129px;font-size:13px;letter-spacing:-0.134px;">Max. Duration</span>
<span class="t" style="left:1753.69px;top:129px;font-size:13px;letter-spacing:-0.052px;">0.8 s</span>
<span class="t" style="left:1654.93px;top:155px;font-size:13px;letter-spacing:-0.180px;">Probability</span>
<span class="t" style="left:1753.64px;top:155px;font-size:13px;letter-spacing:0.096px;">8.2 %</span>
<div style="left:1637px;top:202px;width:300px;height:163px;border:1px solid #dcdcdc;box-sizing:border-box;"></div>
<div style="left:1643.6px;top:202px;width:48px;height:1px;background:#f0f0f0;"></div>
<span class="t" style="left:1646.58px;top:195px;font-size:13px;letter-spacing:-0.231px;">Objects</span>
<span class="t" style="left:1656.97px;top:225px;font-size:13px;letter-spacing:-0.147px;">Asteroid</span>
<span class="t" style="left:1753.79px;top:224px;font-size:13px;letter-spacing:0.167px;">(83830)</span>
<span class="t" style="left:1803.55px;top:224px;font-size:13px;letter-spacing:-0.810px;">2001</span>
<span class="t" style="left:1656.41px;top:249px;font-size:13px;letter-spacing:-0.212px;">Star</span>
<span class="t" style="left:1753.95px;top:249px;font-size:13px;letter-spacing:-0.359px;">G172900.7-</span>
<span class="t" style="left:1820.95px;top:249px;font-size:13px;letter-spacing:-0.834px;">2058</span>
<span class="t" style="left:1656.34px;top:275px;font-size:13px;letter-spacing:-0.365px;">Combined</span>
<span class="t" style="left:1655.93px;top:309px;font-size:13px;letter-spacing:-0.277px;">Position</span>
<span class="t" style="left:1753.61px;top:309px;font-size:13px;letter-spacing:0.172px;">17h</span>
<span class="t" style="left:1779.55px;top:309px;font-size:13px;letter-spacing:-0.289px;">29m</span>
<span class="t" style="left:1808.69px;top:309px;font-size:13px;letter-spacing:-0.131px;">0.7s</span>
<span class="t" style="left:1655.93px;top:335px;font-size:13px;letter-spacing:-0.362px;">Distance</span>
<span class="t" style="left:1754.02px;top:335px;font-size:13px;">-</span>
<div style="left:1635px;top:386px;width:300px;height:87px;border:1px solid #dcdcdc;box-sizing:border-box;"></div>
<div style="left:1641.4px;top:386px;width:44px;height:1px;background:#f0f0f0;"></div>
<span class="t" style="left:1643.93px;top:379px;font-size:13px;letter-spacing:-0.211px;">Report</span>
<span class="t" style="left:1655.93px;top:405px;font-size:13px;letter-spacing:-0.269px;">Recording</span>
<span class="t" style="left:1754.02px;top:405px;font-size:13px;">-</span>
<div style="left:1647px;top:435px;width:122px;height:26px;background:#e1e1e1;border:1px solid #adadad;box-sizing:border-box;"></div>
<span class="t" style="left:1662.34px;top:441px;font-size:13px;letter-spacing:-0.016px;">Create Report...</span>
</body></html>
